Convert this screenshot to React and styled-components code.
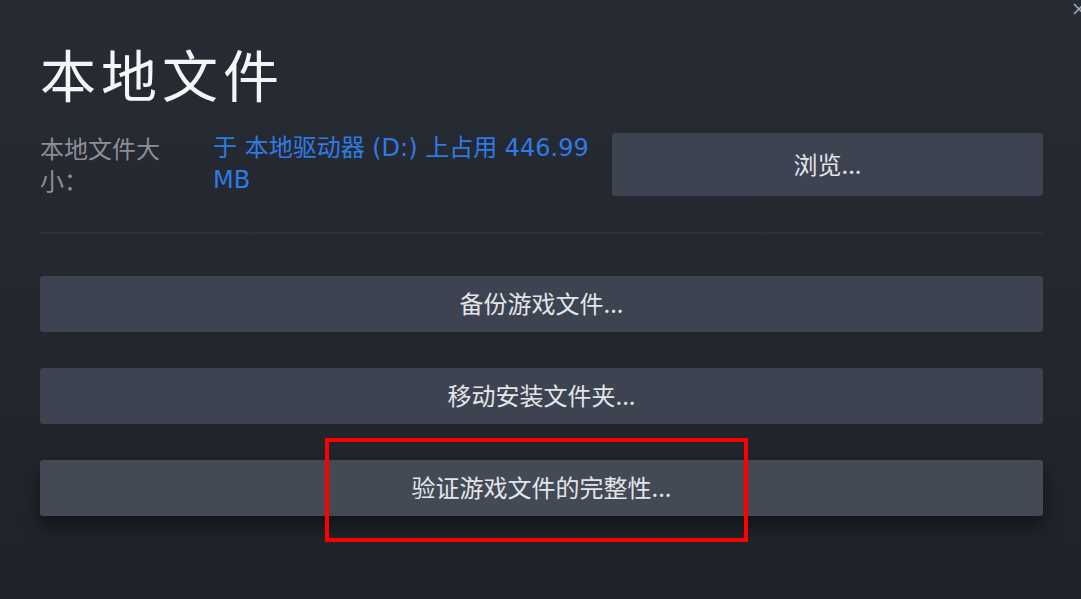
import styled, { createGlobalStyle } from 'styled-components'

const GlobalStyle = createGlobalStyle`
    html, body {
        margin: 0;
        padding: 0;
        background: #22262d;
    }
    * {
        box-sizing: border-box;
    }
`

const Page = styled.div`
    position: relative;
    width: 1081px;
    height: 599px;
    overflow: hidden;
    padding: 35px 38px 0 40px;
    background: linear-gradient(180deg, #272b33 0%, #23262d 60%, #1f2228 100%);
    font-family: 'Noto Sans CJK SC', 'Noto Sans', sans-serif;
    color: #dfe3e8;
`

const CloseMark = styled.svg`
    position: absolute;
    top: 2px;
    right: -5px;
    width: 14px;
    height: 14px;
`

const Title = styled.h1`
    margin: 0;
    font-size: 56px;
    font-weight: 400;
    line-height: 76px;
    letter-spacing: 5px;
    color: #f4f5f6;
`

const InfoRow = styled.div`
    display: grid;
    grid-template-columns: 173px 399px 1fr;
    align-items: start;
    margin-top: 21px;
`

const Label = styled.div`
    max-width: 140px;
    font-size: 24px;
    line-height: 32px;
    color: #8b8f96;
`

const Size = styled.div`
    font-family: 'DejaVu Sans', 'Noto Sans CJK SC', sans-serif;
    font-size: 24px;
    line-height: 32px;
    color: #2f7be6;
`

const Button = styled.button`
    display: flex;
    align-items: center;
    justify-content: center;
    width: 100%;
    height: ${(p) => p.$h || 56}px;
    padding: 0 0 3px;
    border: none;
    border-radius: 3px;
    background: ${(p) => (p.$hover ? '#434a56' : '#3d4350')};
    box-shadow: ${(p) => (p.$hover ? '0 10px 18px rgba(0, 0, 0, 0.45)' : 'none')};
    font-family: inherit;
    font-size: 24px;
    color: #e2e5e9;
    cursor: pointer;
`

const BrowseButton = styled(Button)`
    margin-top: 1px;
`

const Divider = styled.hr`
    margin: 36px 0 0;
    border: none;
    border-top: 2px solid #2c3037;
`

const Actions = styled.div`
    display: flex;
    flex-direction: column;
    gap: 36px;
    margin-top: 42px;
`

const Marked = styled.div`
    position: relative;
`

const Highlight = styled.div`
    position: absolute;
    left: 285px;
    top: -22px;
    width: 423px;
    height: 104px;
    border: 4px solid #ff0000;
    pointer-events: none;
`

const App = () => {
    return (
        <>
            <GlobalStyle />
            <Page>
                <CloseMark viewBox="0 0 14 14">
                    <path d="M2 12 L12 2 M2 2 L12 12" stroke="#9aa7b4" strokeWidth="1.6" />
                </CloseMark>
                <Title>本地文件</Title>
                <InfoRow>
                    <Label>本地文件大小：</Label>
                    <Size>于 本地驱动器 (D:) 上占用 446.99 MB</Size>
                    <BrowseButton $h={63}>浏览...</BrowseButton>
                </InfoRow>
                <Divider />
                <Actions>
                    <Button>备份游戏文件...</Button>
                    <Button>移动安装文件夹...</Button>
                    <Marked>
                        <Button $hover>验证游戏文件的完整性...</Button>
                        <Highlight />
                    </Marked>
                </Actions>
            </Page>
        </>
    )
}

export default App
